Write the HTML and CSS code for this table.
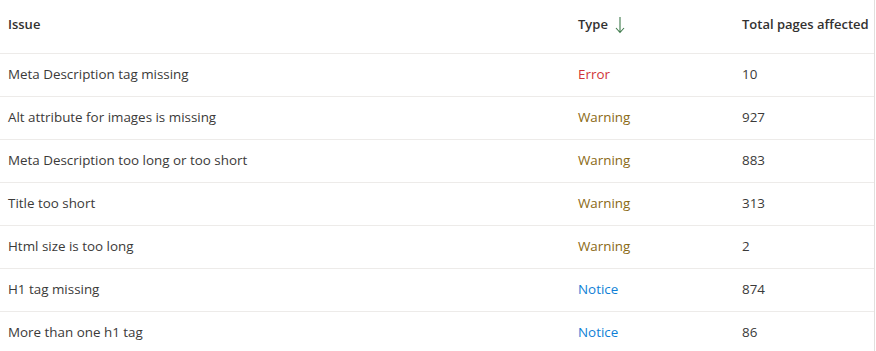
FILE: index.html
```html
<!DOCTYPE html>
<html>
<head>
<meta charset="utf-8">
<link rel="stylesheet" href="styles.css">
</head>
<body>
<div class="frame">
  <div class="table">
    <div class="row head">
      <div class="cell">Issue</div>
      <div class="cell">Type <svg class="arrow" width="10" height="18" viewBox="0 0 10 18"><path d="M5 1 V16 M1 12 L5 16.5 L9 12" fill="none" stroke="#3f7a4c" stroke-width="1.1"/></svg></div>
      <div class="cell">Total pages affected</div>
    </div>
    <div class="row"><div class="cell">Meta Description tag missing</div><div class="cell error">Error</div><div class="cell">10</div></div>
    <div class="row"><div class="cell">Alt attribute for images is missing</div><div class="cell warning">Warning</div><div class="cell">927</div></div>
    <div class="row"><div class="cell">Meta Description too long or too short</div><div class="cell warning">Warning</div><div class="cell">883</div></div>
    <div class="row"><div class="cell">Title too short</div><div class="cell warning">Warning</div><div class="cell">313</div></div>
    <div class="row"><div class="cell">Html size is too long</div><div class="cell warning">Warning</div><div class="cell">2</div></div>
    <div class="row"><div class="cell">H1 tag missing</div><div class="cell notice">Notice</div><div class="cell">874</div></div>
    <div class="row"><div class="cell">More than one h1 tag</div><div class="cell notice">Notice</div><div class="cell">86</div></div>
  </div>
</div>
</body>
</html>
```

FILE: styles.css
```css
html, body {
  margin: 0;
  padding: 0;
  background: #ffffff;
}
body {
  font-family: "Open Sans", "Noto Sans", sans-serif;
  font-size: 13.4px;
  color: #3b3a39;
  overflow: hidden;
}
.frame {
  width: 874px;
  height: 351px;
  border-right: 1px solid #e1dfdd;
}
.table {
  display: flex;
  flex-direction: column;
}
.row {
  display: grid;
  grid-template-columns: 570px 164px 1fr;
  height: 43px;
  box-sizing: border-box;
  padding-bottom: 2px;
  align-items: center;
  border-bottom: 1px solid #edebe9;
}
.row.head {
  height: 54px;
  padding-bottom: 5px;
  font-weight: 600;
  font-size: 13px;
  color: #323130;
}
.cell {
  padding-left: 8px;
  white-space: nowrap;
  display: flex;
  align-items: center;
}
.arrow {
  margin-left: 7px;
  margin-top: 2px;
}
.error { color: #d13438; }
.warning { color: #8a6914; }
.notice { color: #0f7fd6; }
```
